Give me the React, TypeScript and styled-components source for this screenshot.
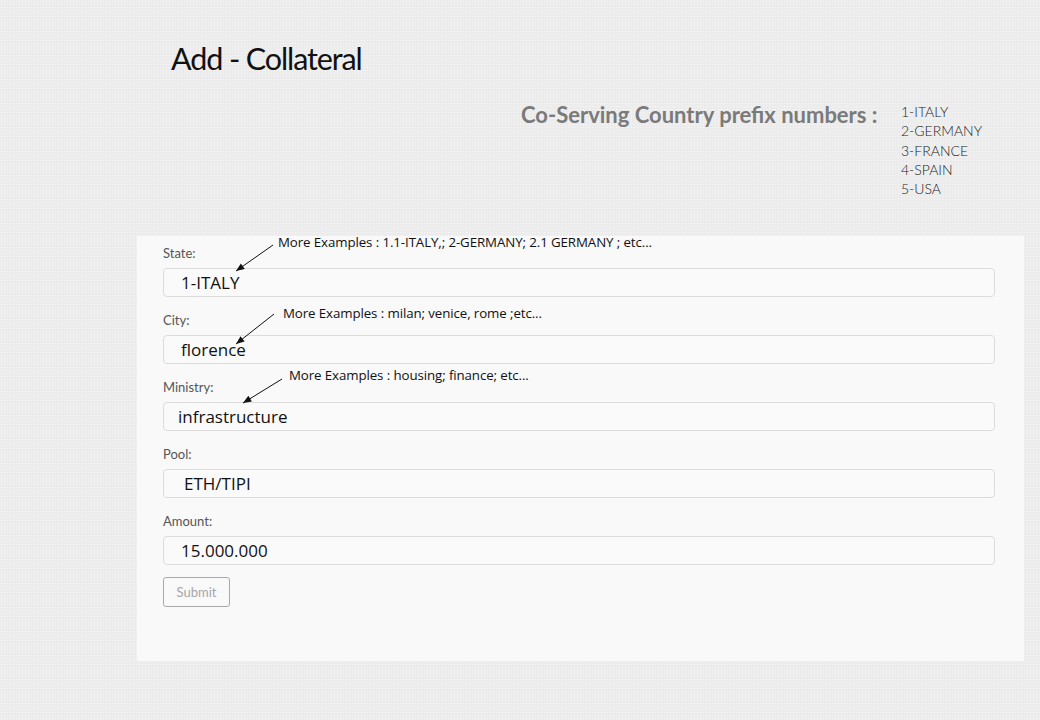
import styled, { createGlobalStyle } from "styled-components";

const GlobalStyle = createGlobalStyle`
  html, body {
    margin: 0;
    padding: 0;
  }
  body {
    font-family: Lato, "Open Sans", sans-serif;
  }
`;

const Page = styled.div`
  width: 1040px;
  height: 720px;
  overflow: hidden;
  background-color: #ececec;
  background-image: radial-gradient(rgba(255, 255, 255, 0.55) 0.6px, transparent 0.9px);
  background-size: 3px 3px;
  padding-top: 38px;
  box-sizing: border-box;
`;

const Title = styled.h1`
  margin: 0 0 0 171px;
  font-family: Lato, sans-serif;
  font-weight: 400;
  font-size: 30.5px;
  line-height: 40px;
  color: #111;
  letter-spacing: -1.1px;
`;

const PrefixRow = styled.div`
  display: flex;
  margin: 22px 0 0 521px;
  height: 136px;
`;

const PrefixHeading = styled.h2`
  margin: 0;
  width: 380px;
  font-family: Lato, sans-serif;
  font-weight: 700;
  font-size: 22px;
  line-height: 30px;
  color: #7a7a7a;
`;

const CountryList = styled.ul`
  list-style: none;
  margin: 2px 0 0 0;
  padding: 0;
  li {
    font-family: Lato, sans-serif;
    font-weight: 300;
    font-size: 14px;
    line-height: 19.3px;
    color: #222;
  }
`;

const Panel = styled.div`
  margin-left: 137px;
  width: 887px;
  height: 425px;
  background: #f9f9f9;
  box-sizing: border-box;
  padding: 8px 0 0 26px;
  display: flex;
  flex-direction: column;
  gap: 14px;
`;

const Field = styled.div`
  position: relative;
  display: flex;
  flex-direction: column;
  gap: 6px;
  width: 832px;
`;

const Label = styled.label`
  font-family: Lato, sans-serif;
  font-size: 13px;
  line-height: 18px;
  color: #555;
`;

const Input = styled.div<{ $indent: number }>`
  height: 29px;
  box-sizing: border-box;
  border: 1px solid #dcdcdc;
  border-radius: 4px;
  background: #fafafa;
  display: flex;
  align-items: center;
  padding-left: ${(p) => p.$indent}px;
  font-family: "Open Sans", sans-serif;
  font-size: 17px;
  color: #111;
`;

const Note = styled.span<{ $x: number; $y: number }>`
  position: absolute;
  left: ${(p) => p.$x}px;
  top: ${(p) => p.$y}px;
  font-family: "Open Sans", sans-serif;
  font-size: 13.3px;
  line-height: 16px;
  color: #111;
  white-space: nowrap;
  letter-spacing: -0.1px;
`;

const ArrowSvg = styled.svg`
  position: absolute;
  left: 0;
  top: 0;
  overflow: visible;
  pointer-events: none;
`;

const SubmitRow = styled.div`
  margin-top: -2px;
`;

const SubmitButton = styled.button`
  width: 67px;
  height: 30px;
  border: 1px solid #a9a9a9;
  border-radius: 3px;
  background: #f9f9f9;
  color: #a6a6a6;
  font-family: Lato, sans-serif;
  font-size: 13px;
  padding: 0;
`;

type Hint = {
  text: string;
  x: number;
  y: number;
  from: [number, number];
  to: [number, number];
};

const Arrow = ({ from, to }: { from: [number, number]; to: [number, number] }) => {
  const [x1, y1] = from;
  const [x2, y2] = to;
  const ang = Math.atan2(y2 - y1, x2 - x1);
  const len = 9;
  const spread = 0.38;
  const a = [x2 - len * Math.cos(ang - spread), y2 - len * Math.sin(ang - spread)];
  const b = [x2 - len * Math.cos(ang + spread), y2 - len * Math.sin(ang + spread)];
  return (
    <ArrowSvg width="1" height="1">
      <line x1={x1} y1={y1} x2={x2} y2={y2} stroke="#111" strokeWidth="1" />
      <polygon points={`${x2},${y2} ${a[0]},${a[1]} ${b[0]},${b[1]}`} fill="#111" />
    </ArrowSvg>
  );
};

const fields: { label: string; value: string; indent: number; hint?: Hint }[] = [
  {
    label: "State:",
    value: "1-ITALY",
    indent: 17,
    hint: {
      text: "More Examples : 1.1-ITALY,; 2-GERMANY; 2.1 GERMANY ; etc...",
      x: 115,
      y: -10,
      from: [110, 1],
      to: [73, 27],
    },
  },
  {
    label: "City:",
    value: "florence",
    indent: 17,
    hint: {
      text: "More Examples : milan; venice, rome ;etc...",
      x: 120,
      y: -6,
      from: [111, 3],
      to: [73, 33],
    },
  },
  {
    label: "Ministry:",
    value: "infrastructure",
    indent: 14,
    hint: {
      text: "More Examples : housing; finance; etc...",
      x: 126,
      y: -11,
      from: [119, 1],
      to: [80, 25],
    },
  },
  { label: "Pool:", value: "ETH/TIPI", indent: 20 },
  { label: "Amount:", value: "15.000.000", indent: 17 },
];

const App = () => {
  return (
    <Page>
      <GlobalStyle />
      <Title>Add - Collateral</Title>
      <PrefixRow>
        <PrefixHeading>Co-Serving Country prefix numbers :</PrefixHeading>
        <CountryList>
          <li>1-ITALY</li>
          <li>2-GERMANY</li>
          <li>3-FRANCE</li>
          <li>4-SPAIN</li>
          <li>5-USA</li>
        </CountryList>
      </PrefixRow>
      <Panel>
        {fields.map((f) => (
          <Field key={f.label}>
            <Label>{f.label}</Label>
            <Input $indent={f.indent}>{f.value}</Input>
            {f.hint && (
              <>
                <Note $x={f.hint.x} $y={f.hint.y}>
                  {f.hint.text}
                </Note>
                <Arrow from={f.hint.from} to={f.hint.to} />
              </>
            )}
          </Field>
        ))}
        <SubmitRow>
          <SubmitButton>Submit</SubmitButton>
        </SubmitRow>
      </Panel>
    </Page>
  );
};

export default App;
